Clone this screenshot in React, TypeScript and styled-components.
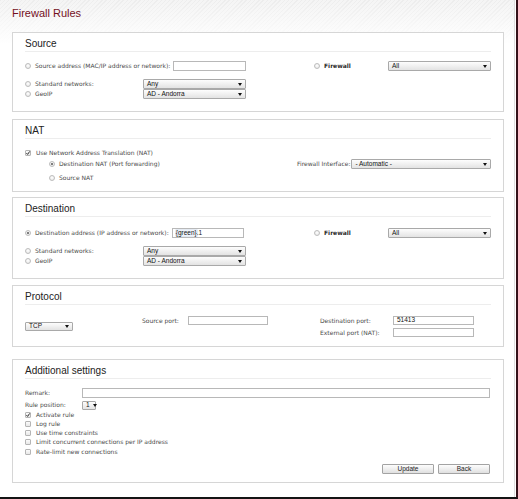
import React from "react";
import styled, { createGlobalStyle } from "styled-components";

const GlobalStyle = createGlobalStyle`
  html, body {
    margin: 0;
    padding: 0;
    background: #fff;
  }
  body {
    font-family: "DejaVu Sans", Verdana, sans-serif;
  }
`;

const Frame = styled.div`
  width: 518px;
  height: 499px;
  box-sizing: border-box;
  display: flex;
  padding-right: 1px;
  border-right: 2px solid #35121a;
  border-bottom: 2px solid #141414;
  overflow: hidden;
`;

const Page = styled.div`
  flex: 1;
  padding: 7px 0 0 12px;
  border-right: 1px solid #dedede;
  background:
    linear-gradient(to bottom, rgba(255, 255, 255, 0.35) 0px, #fff 44px),
    repeating-linear-gradient(-45deg, #e3e3e3 0 1px, #efefef 1px 3px);
`;

const Title = styled.h1`
  margin: 0 0 12px;
  font: normal 11px/13px "Liberation Sans", Arial, sans-serif;
  color: #74101d;
`;

const Panel = styled.section<{ $mb: number }>`
  width: 492px;
  box-sizing: border-box;
  border: 1px solid #d6d6d6;
  background: #fff;
  margin-bottom: ${(p) => p.$mb}px;
`;

const PanelHead = styled.h2`
  margin: 0 12px;
  padding-top: 3px;
  height: 15px;
  font: normal 10px/15px "Liberation Sans", Arial, sans-serif;
  color: #222;
  border-bottom: 1px solid #ededed;
`;

const PanelBody = styled.div<{ $pt: number; $pb: number }>`
  padding: ${(p) => p.$pt}px 12px ${(p) => p.$pb}px;
`;

const Row = styled.div<{ $h?: number; $mt?: number; $indent?: number }>`
  display: flex;
  align-items: center;
  height: ${(p) => p.$h ?? 10}px;
  margin-top: ${(p) => p.$mt ?? 0}px;
  padding-left: ${(p) => p.$indent ?? 0}px;
`;

const Cell = styled.div<{ $w?: number; $push?: boolean }>`
  display: flex;
  align-items: center;
  flex: ${(p) => (p.$w ? `0 0 ${p.$w}px` : "1 1 auto")};
  min-width: 0;
  margin-left: ${(p) => (p.$push ? "auto" : "0")};
`;

const Text = styled.span<{ $bold?: boolean }>`
  font-size: 6px;
  line-height: 1;
  font-weight: ${(p) => (p.$bold ? "bold" : "normal")};
  color: ${(p) => (p.$bold ? "#2a2a2a" : "#4a4a4a")};
  white-space: nowrap;
`;

const Radio = styled.span<{ $on?: boolean }>`
  flex: 0 0 auto;
  position: relative;
  width: 6px;
  height: 6px;
  box-sizing: border-box;
  margin-right: 4px;
  border-radius: 50%;
  border: 1px solid #bdbdbd;
  background: radial-gradient(circle at 50% 40%, #fff, #e4e4e4);

  &::after {
    content: "";
    display: ${(p) => (p.$on ? "block" : "none")};
    position: absolute;
    left: 1px;
    top: 1px;
    width: 2px;
    height: 2px;
    border-radius: 50%;
    background: #555;
  }
`;

const CheckBox = styled.span`
  flex: 0 0 auto;
  display: flex;
  width: 6px;
  height: 6px;
  box-sizing: border-box;
  margin-right: 5px;
  border: 1px solid #b5b5b5;
  border-radius: 1px;
  background: linear-gradient(#fbfbfb, #e8e8e8);

  svg {
    width: 6px;
    height: 6px;
    margin: -1px;
  }
`;

const Field = styled.div<{ $w?: number; $ml?: number }>`
  display: flex;
  align-items: center;
  box-sizing: border-box;
  width: ${(p) => (p.$w ? `${p.$w}px` : "100%")};
  height: 10px;
  margin-left: ${(p) => p.$ml ?? 0}px;
  padding: 0 3px;
  border: 1px solid #b8b8b8;
  background: #fff;
  font: 6.5px/1 "Liberation Sans", Arial, sans-serif;
  color: #111;
  white-space: nowrap;
`;

const Highlight = styled.span`
  background: #eef3fa;
  box-shadow: 0 0 0 0.5px #c9d6e6;
`;

const Select = styled.div<{ $w?: number; $ml?: number; $h?: number }>`
  display: flex;
  align-items: center;
  justify-content: space-between;
  box-sizing: border-box;
  width: ${(p) => (p.$w ? `${p.$w}px` : "100%")};
  height: ${(p) => p.$h ?? 10}px;
  margin-left: ${(p) => p.$ml ?? 0}px;
  padding: 0 3px;
  border: 1px solid #a9a9a9;
  border-radius: 1px;
  background: linear-gradient(#fdfdfd, #e3e3e3);
  font: 6.5px/1 "Liberation Sans", Arial, sans-serif;
  color: #111;
  white-space: nowrap;

  &::after {
    content: "";
    flex: 0 0 auto;
    margin-left: 3px;
    border-left: 2px solid transparent;
    border-right: 2px solid transparent;
    border-top: 3px solid #111;
  }
`;

const ProtoGrid = styled.div`
  display: grid;
  grid-template-columns: 117px 46px 80px 52px 73px 81px;
  grid-template-rows: 9px 9px;
  row-gap: 3px;
  align-items: center;

  & > div {
    height: 9px;
  }
`;

const Tcp = styled.div`
  grid-row: 1 / span 2;
  align-self: center;
`;

const ButtonBar = styled.div`
  display: flex;
  justify-content: flex-end;
  gap: 4px;
  margin-top: 8px;
  padding-right: 1px;
`;

const Button = styled.button`
  width: 52px;
  height: 10px;
  padding: 0;
  border: 1px solid #a3a3a3;
  border-radius: 1px;
  background: linear-gradient(#fdfdfd, #e0e0e0);
  font: 6.5px/1 "Liberation Sans", Arial, sans-serif;
  color: #222;
  cursor: pointer;
`;

const Tick = () => (
  <svg viewBox="0 0 6 6">
    <path d="M1.4 3.1 L2.6 4.4 L4.7 1.4" fill="none" stroke="#333" strokeWidth="1" />
  </svg>
);

const Check = ({ on, label }: { on?: boolean; label: string }) => (
  <Row $h={9.25}>
    <CheckBox>{on && <Tick />}</CheckBox>
    <Text>{label}</Text>
  </Row>
);

const NetworkRows = ({ top }: { top: number }) => (
  <>
    <Row $mt={top}>
      <Cell $w={118}>
        <Radio />
        <Text>Standard networks:</Text>
      </Cell>
      <Select $w={103}>Any</Select>
    </Row>
    <Row>
      <Cell $w={118}>
        <Radio />
        <Text>GeoIP</Text>
      </Cell>
      <Select $w={103}>AD - Andorra</Select>
    </Row>
  </>
);

const FirewallPick = () => (
  <>
    <Cell $w={74}>
      <Radio />
      <Text $bold>Firewall</Text>
    </Cell>
    <Select>All</Select>
  </>
);

const App: React.FC = () => {
  return (
    <Frame>
      <GlobalStyle />
      <Page>
        <Title>Firewall Rules</Title>

        <Panel $mb={7}>
          <PanelHead>Source</PanelHead>
          <PanelBody $pt={9} $pb={12}>
            <Row>
              <Cell $w={289}>
                <Radio />
                <Text>Source address (MAC/IP address or network):</Text>
                <Field $w={73} $ml={3} />
              </Cell>
              <FirewallPick />
            </Row>
            <NetworkRows top={8} />
          </PanelBody>
        </Panel>

        <Panel $mb={5}>
          <PanelHead>NAT</PanelHead>
          <PanelBody $pt={9} $pb={8}>
            <Row>
              <CheckBox>
                <Tick />
              </CheckBox>
              <Text>Use Network Address Translation (NAT)</Text>
            </Row>
            <Row $mt={1} $indent={24}>
              <Radio $on />
              <Text>Destination NAT (Port forwarding)</Text>
              <Cell $w={194} $push>
                <Text>Firewall Interface:</Text>
                <Select $ml={1}>- Automatic -</Select>
              </Cell>
            </Row>
            <Row $mt={4} $indent={24}>
              <Radio />
              <Text>Source NAT</Text>
            </Row>
          </PanelBody>
        </Panel>

        <Panel $mb={6}>
          <PanelHead>Destination</PanelHead>
          <PanelBody $pt={11} $pb={12}>
            <Row>
              <Cell $w={289}>
                <Radio $on />
                <Text>Destination address (IP address or network):</Text>
                <Field $w={72} $ml={3}>
                  <Highlight>{"{green}"}</Highlight>.1
                </Field>
              </Cell>
              <FirewallPick />
            </Row>
            <NetworkRows top={8} />
          </PanelBody>
        </Panel>

        <Panel $mb={12}>
          <PanelHead>Protocol</PanelHead>
          <PanelBody $pt={11} $pb={9}>
            <ProtoGrid>
              <Tcp>
                <Select $w={48} $h={9}>TCP</Select>
              </Tcp>
              <Text>Source port:</Text>
              <Field $w={80} />
              <span />
              <Text>Destination port:</Text>
              <Field $w={81}>51413</Field>
              <span />
              <span />
              <span />
              <Text>External port (NAT):</Text>
              <Field $w={81} />
            </ProtoGrid>
          </PanelBody>
        </Panel>

        <Panel $mb={0}>
          <PanelHead>Additional settings</PanelHead>
          <PanelBody $pt={9} $pb={8}>
            <Row>
              <Cell $w={57}>
                <Text>Remark:</Text>
              </Cell>
              <Field $w={408} />
            </Row>
            <Row $mt={2}>
              <Cell $w={57}>
                <Text>Rule position:</Text>
              </Cell>
              <Select $w={14} $h={9}>1</Select>
            </Row>
            <Check on label="Activate rule" />
            <Check label="Log rule" />
            <Check label="Use time constraints" />
            <Check label="Limit concurrent connections per IP address" />
            <Check label="Rate-limit new connections" />
            <ButtonBar>
              <Button>Update</Button>
              <Button>Back</Button>
            </ButtonBar>
          </PanelBody>
        </Panel>
      </Page>
    </Frame>
  );
};

export default App;
